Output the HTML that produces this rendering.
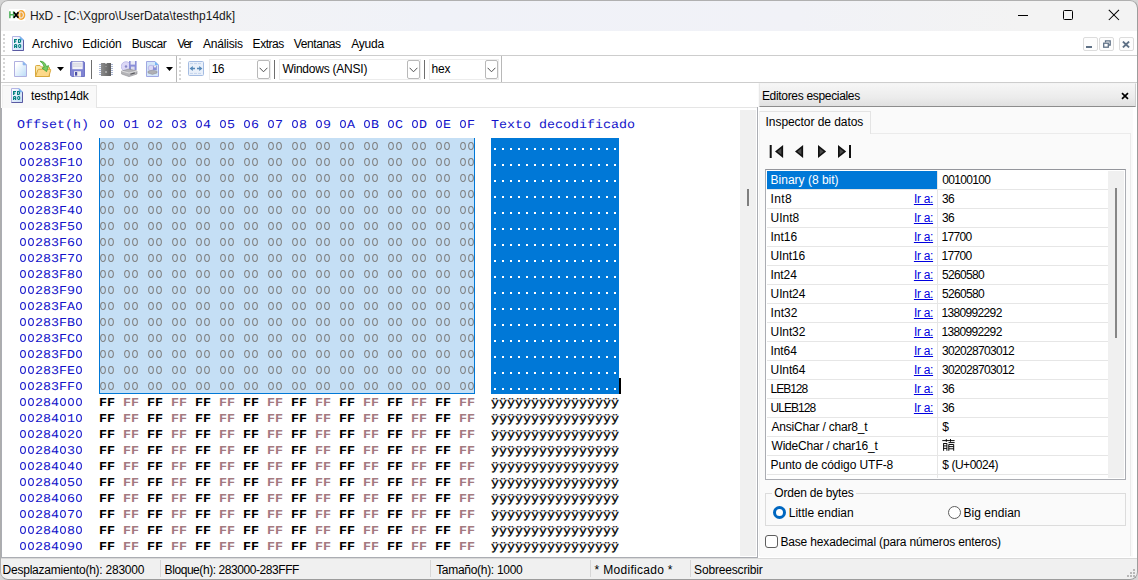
<!DOCTYPE html><html><head><meta charset="utf-8"><style>
*{box-sizing:border-box;margin:0;padding:0}
html,body{width:1138px;height:580px;overflow:hidden;background:#d4d4d4;font-family:"Liberation Sans",sans-serif}
body{font-family:"Liberation Sans",sans-serif;font-size:12px;color:#000;position:relative}
div,span,svg{position:absolute}
.t{white-space:pre;line-height:14px;height:14px;font-size:12px}
.m{font-family:"Liberation Mono",monospace;font-size:13.333px;white-space:pre;line-height:16px;height:16px;transform:scaleY(0.9);transform-origin:0 11px;text-rendering:geometricPrecision}
.o{color:#1212ca}
.s{color:#7a7a7a}
.k{color:#000;font-weight:bold}
.r{color:#a47a80;font-weight:bold}
.w{color:#fff}
.y{color:#000;transform:scaleY(0.86);transform-origin:0 12px;-webkit-text-stroke:0.35px #000}
.vs{width:1px;background:#d7d7d7}
.cb{background:#fff;border:1px solid #ececec}
.dd{background:#fff;border:1px solid #b9b9b9;border-radius:2px}
.ig{left:912px;width:24px}
</style></head><body>
<div style="left:0;top:0;width:1138px;height:580px;border-radius:8px;overflow:hidden">
<div style="left:0;top:0;width:1138px;height:580px;background:#f0f0f0"></div>
<div style="left:1px;top:1px;width:1136px;height:30px;background:linear-gradient(90deg,#f3f3f3 0%,#f3f3f4 12%,#f0f2f8 38%,#f1f2f7 70%,#f3f3f3 90%);border-radius:7px 7px 0 0"></div>
<svg style="left:9px;top:9px" width="17" height="12" viewBox="0 0 17 12"><rect width="16.3" height="11.8" fill="#fff"/><ellipse cx="12.2" cy="6" rx="4.1" ry="5" fill="#f2a534"/><path d="M10.8 3V9H12.2Q14.4 8.8 14.4 6Q14.4 3.2 12.2 3Z" fill="none" stroke="#f1f1fb" stroke-width="1"/><path d="M0.9 2.2V9.2M4.6 2.2V9.2M0.9 5.7H4.6" stroke="#4caf58" stroke-width="1.5" fill="none"/><path d="M4.8 3.2L9.4 8.8M9.4 3.2L4.8 8.8" stroke="#000" stroke-width="1.8"/></svg>
<div style="left:1018px;top:15px;width:10px;height:1px;background:#000"></div>
<div style="left:1063px;top:10px;width:10px;height:10px;border:1px solid #000;border-radius:1.5px"></div>
<svg style="left:1108px;top:9px" width="12" height="12" viewBox="0 0 12 12"><path d="M0.8 0.8L11 11M11 0.8L0.8 11" stroke="#000" stroke-width="1.05"/></svg>
<div style="left:1px;top:31px;width:1136px;height:24px;background:#fff"></div>
<div style="left:1px;top:55px;width:1136px;height:1px;background:#cdcdcd"></div>
<div style="left:3px;top:34px;width:2px;height:2px;background:#d6d6d6"></div><div style="left:3px;top:38px;width:2px;height:2px;background:#d6d6d6"></div><div style="left:3px;top:42px;width:2px;height:2px;background:#d6d6d6"></div><div style="left:3px;top:46px;width:2px;height:2px;background:#d6d6d6"></div><div style="left:3px;top:50px;width:2px;height:2px;background:#d6d6d6"></div>
<svg style="left:12px;top:36px" width="12" height="15" viewBox="0 0 12 15"><defs><linearGradient id="g1" x1="0" y1="0" x2="1" y2="1"><stop offset="0" stop-color="#fff"/><stop offset="1" stop-color="#c4dcf6"/></linearGradient></defs><path d="M0.5 0.5H8L11.5 4V14.5H0.5Z" fill="url(#g1)" stroke="#b4b4e4"/><path d="M11.5 4V14.5H0.5" fill="none" stroke="#5a5aa2"/><path d="M8 0.5V4H11.5Z" fill="#6aaef0" stroke="#8cb8ec" stroke-width="0.6"/><g fill="#058080"><rect x="2" y="3" width="1.3" height="4"/><rect x="2" y="3" width="3" height="1.1"/><rect x="2" y="4.7" width="2.3" height="1"/><rect x="6" y="3" width="1.3" height="4"/><rect x="6" y="3" width="2.4" height="1"/><rect x="6" y="6" width="2.4" height="1"/><rect x="8" y="3.7" width="1.1" height="2.6"/><rect x="2" y="8.7" width="1.2" height="3.3"/><rect x="4" y="8.7" width="1.2" height="3.3"/><rect x="2.6" y="8" width="2" height="1.1"/><rect x="2" y="10" width="3" height="0.9"/><rect x="6.2" y="8.7" width="1.1" height="2.6"/><rect x="8.1" y="8.7" width="1.1" height="2.6"/><rect x="6.9" y="8" width="1.7" height="1"/><rect x="6.9" y="11" width="1.7" height="1"/></g></svg>
<div style="left:1083px;top:37px;width:15px;height:14px;border:1px solid #dcdcdc;border-radius:2px;background:#fdfdfd"></div><div style="left:1099px;top:37px;width:15px;height:14px;border:1px solid #dcdcdc;border-radius:2px;background:#fdfdfd"></div><div style="left:1118.5px;top:37px;width:15px;height:14px;border:1px solid #dcdcdc;border-radius:2px;background:#fdfdfd"></div>
<div style="left:1086px;top:46px;width:6px;height:2px;background:#5f7186"></div>
<svg style="left:1103px;top:40px" width="8" height="8" viewBox="0 0 8 8"><path d="M2.5 2.5V0.8H7.2V5H5.5" fill="none" stroke="#5f7186" stroke-width="1.3"/><rect x="0.7" y="3.2" width="4.6" height="4" fill="#fff" stroke="#5f7186" stroke-width="1.3"/></svg>
<svg style="left:1122px;top:41px" width="8" height="7" viewBox="0 0 8 7"><path d="M0.9 0.6L7.1 6.4M7.1 0.6L0.9 6.4" stroke="#5f7186" stroke-width="1.9"/></svg>
<div style="left:1px;top:56px;width:1136px;height:26px;background:#fff"></div>
<div style="left:1px;top:82px;width:1136px;height:1px;background:#cdcdcd"></div>
<div style="left:3px;top:58px;width:2px;height:2px;background:#d6d6d6"></div><div style="left:3px;top:62px;width:2px;height:2px;background:#d6d6d6"></div><div style="left:3px;top:66px;width:2px;height:2px;background:#d6d6d6"></div><div style="left:3px;top:70px;width:2px;height:2px;background:#d6d6d6"></div><div style="left:3px;top:74px;width:2px;height:2px;background:#d6d6d6"></div><div style="left:3px;top:78px;width:2px;height:2px;background:#d6d6d6"></div>
<div style="left:179px;top:58px;width:2px;height:2px;background:#d6d6d6"></div><div style="left:179px;top:62px;width:2px;height:2px;background:#d6d6d6"></div><div style="left:179px;top:66px;width:2px;height:2px;background:#d6d6d6"></div><div style="left:179px;top:70px;width:2px;height:2px;background:#d6d6d6"></div><div style="left:179px;top:74px;width:2px;height:2px;background:#d6d6d6"></div><div style="left:179px;top:78px;width:2px;height:2px;background:#d6d6d6"></div>
<div style="left:176px;top:56px;width:1px;height:26px;background:#b8b8b8"></div>
<div style="left:501px;top:56px;width:1px;height:26px;background:#b8b8b8"></div>
<svg style="left:14px;top:61px" width="13" height="16" viewBox="0 0 13 16"><defs><linearGradient id="gn" x1="0" y1="0" x2="1" y2="1"><stop offset="0.2" stop-color="#fff"/><stop offset="1" stop-color="#b9dbf7"/></linearGradient></defs><path d="M0.5 0.5H9L12.5 4V15.5H0.5Z" fill="url(#gn)" stroke="#b0b0e0"/><path d="M9 0.5V4H12.5Z" fill="#74b6f4" stroke="#a8b8e8" stroke-width="0.7"/></svg>
<svg style="left:34px;top:60px" width="18" height="18" viewBox="0 0 18 18"><path d="M1.5 16.5V6.5Q1.5 5.5 2.5 5.5H6L7.5 7H14.5Q15.5 7 15.5 8V16.5Z" fill="#fbe7a8" stroke="#d9a93e"/><path d="M1.5 16.5L3.8 10Q4 9.3 4.8 9.3H16Q17 9.3 16.7 10.2L14.8 16.5Z" fill="#fdd98a" stroke="#d9a93e"/><path d="M6 1.2Q11 1.2 12.4 6.5L14.6 5.6L12.6 11.6L8 8.2L10.3 7.3Q9.5 3.2 6 1.2Z" fill="#78cc62" stroke="#45a338" stroke-width="0.8"/></svg>
<svg style="left:57px;top:67px" width="7" height="4" viewBox="0 0 7 4"><path d="M0 0H7L3.5 4Z" fill="#000"/></svg>
<svg style="left:70px;top:61px" width="15" height="16" viewBox="0 0 15 16"><path d="M1.3 0.5H13.7L14.5 1.3V15.5H1.8L0.5 14.2V1.3Z" fill="#7f83d3" stroke="#7074c4"/><rect x="2.3" y="0.6" width="10.4" height="7.6" fill="#f4f4f8"/><rect x="3.6" y="2.2" width="7.6" height="3.6" fill="#e2e2ea" stroke="#d2d2dc" stroke-width="0.5"/><rect x="4" y="10.3" width="7" height="5.2" fill="#f0f0f0"/><rect x="5" y="11" width="2.2" height="3.6" fill="#4a4ea6"/></svg>
<div style="left:91px;top:60px;width:1px;height:19px;background:#6e6e6e"></div>
<svg style="left:99px;top:62px" width="14" height="14" viewBox="0 0 14 14"><defs><linearGradient id="gc" x1="0" y1="0" x2="1" y2="0"><stop offset="0" stop-color="#8c8c8c"/><stop offset="1" stop-color="#5e5e5e"/></linearGradient></defs><rect x="0" y="2" width="2" height="1" fill="#a9b6d4"/><rect x="12" y="2" width="2" height="1" fill="#a9b6d4"/><rect x="0" y="4" width="2" height="1" fill="#a9b6d4"/><rect x="12" y="4" width="2" height="1" fill="#a9b6d4"/><rect x="0" y="6" width="2" height="1" fill="#a9b6d4"/><rect x="12" y="6" width="2" height="1" fill="#a9b6d4"/><rect x="0" y="8" width="2" height="1" fill="#a9b6d4"/><rect x="12" y="8" width="2" height="1" fill="#a9b6d4"/><rect x="0" y="10" width="2" height="1" fill="#a9b6d4"/><rect x="12" y="10" width="2" height="1" fill="#a9b6d4"/><rect x="0" y="12" width="2" height="1" fill="#a9b6d4"/><rect x="12" y="12" width="2" height="1" fill="#a9b6d4"/><rect x="2" y="1" width="10" height="13" fill="url(#gc)"/><rect x="6" y="1" width="2" height="1" fill="#c0c0c0"/><rect x="6" y="9" width="2" height="2" fill="#a4a4a4"/><rect x="6" y="4" width="2" height="1" fill="#8e8e8e"/></svg>
<svg style="left:121px;top:60px" width="17" height="17" viewBox="0 0 17 17"><circle cx="5" cy="6.5" r="4.8" fill="#dcd8f6" stroke="#b8b4e6" stroke-width="0.8"/><circle cx="5" cy="6.5" r="1.2" fill="#8888c8"/><rect x="8" y="1" width="7.6" height="9" fill="#8a8ed8"/><rect x="9.6" y="1" width="4.4" height="3.6" fill="#ececf6"/><rect x="10" y="6.6" width="3.6" height="3.4" fill="#dcdcec"/><path d="M0.6 11L8 9L16 11V14L8 16.6L0.6 14Z" fill="#b4b4b8" stroke="#8c8c90" stroke-width="0.6"/><path d="M0.6 11L8 13L16 11" fill="none" stroke="#e6e6e6" stroke-width="0.8"/><rect x="9.4" y="13.2" width="4.6" height="1.2" fill="#5a5a5e" transform="rotate(-17 11 14)"/></svg>
<svg style="left:146px;top:61px" width="13" height="16" viewBox="0 0 13 16"><path d="M0.5 0.5H9L12.5 4V15.5H0.5Z" fill="#d4e6fa" stroke="#a0a8e2"/><path d="M9 0.5V4H12.5Z" fill="#74b6f4"/><circle cx="5" cy="7" r="2.8" fill="#dcd8f6" stroke="#a8a4dc" stroke-width="0.6"/><rect x="7" y="4.6" width="3.8" height="4.6" fill="#8a8ed8"/><rect x="7.8" y="4.6" width="2.2" height="1.8" fill="#eee"/><path d="M2 10.2L6.4 9.2L11 10.2V12L6.4 13.4L2 12Z" fill="#b0b0b4" stroke="#8c8c90" stroke-width="0.5"/></svg>
<svg style="left:166px;top:67px" width="7" height="4" viewBox="0 0 7 4"><path d="M0 0H7L3.5 4Z" fill="#000"/></svg>
<svg style="left:188px;top:61px" width="16" height="15" viewBox="0 0 16 15"><rect x="0.5" y="0.5" width="15" height="14" rx="1" fill="#e9f0fa" stroke="#a4bce2"/><path d="M2 2.6H14M2 12.4H14" stroke="#c4d4ec" stroke-width="1" stroke-dasharray="3 1"/><path d="M1.6 7.5L4.8 4.9V6.8H7V8.2H4.8V10.1Z M14.4 7.5L11.2 4.9V6.8H9V8.2H11.2V10.1Z" fill="#5588b8"/></svg>
<div class="cb" style="left:209px;top:59px;width:62px;height:21px"></div><div class="dd" style="left:257px;top:60px;width:13px;height:19px"></div><svg style="left:259px;top:67px" width="9" height="6" viewBox="0 0 9 6"><path d="M0.6 0.8L4.5 4.8L8.4 0.8" fill="none" stroke="#505050" stroke-width="1"/></svg>
<div class="cb" style="left:279px;top:59px;width:142px;height:21px"></div><div class="dd" style="left:407px;top:60px;width:13px;height:19px"></div><svg style="left:409px;top:67px" width="9" height="6" viewBox="0 0 9 6"><path d="M0.6 0.8L4.5 4.8L8.4 0.8" fill="none" stroke="#505050" stroke-width="1"/></svg>
<div class="cb" style="left:429px;top:59px;width:70px;height:21px"></div><div class="dd" style="left:485px;top:60px;width:13px;height:19px"></div><svg style="left:487px;top:67px" width="9" height="6" viewBox="0 0 9 6"><path d="M0.6 0.8L4.5 4.8L8.4 0.8" fill="none" stroke="#505050" stroke-width="1"/></svg>
<div style="left:274px;top:60px;width:1px;height:19px;background:#6e6e6e"></div>
<div style="left:424px;top:60px;width:1px;height:19px;background:#6e6e6e"></div>
<div style="left:1px;top:83px;width:757px;height:25px;background:#fff"></div>
<div style="left:96px;top:107px;width:662px;height:1px;background:#e5e5e5"></div>
<div style="left:2px;top:85px;width:95px;height:23px;background:#f9f9f9;border:1px solid #e5e5e5;border-bottom:none;border-left-color:#f2f2f2"></div>
<svg style="left:11px;top:88px" width="12" height="15" viewBox="0 0 12 15"><defs><linearGradient id="g2" x1="0" y1="0" x2="1" y2="1"><stop offset="0" stop-color="#fff"/><stop offset="1" stop-color="#c4dcf6"/></linearGradient></defs><path d="M0.5 0.5H8L11.5 4V14.5H0.5Z" fill="url(#g2)" stroke="#b4b4e4"/><path d="M11.5 4V14.5H0.5" fill="none" stroke="#5a5aa2"/><path d="M8 0.5V4H11.5Z" fill="#6aaef0" stroke="#8cb8ec" stroke-width="0.6"/><g fill="#058080"><rect x="2" y="3" width="1.3" height="4"/><rect x="2" y="3" width="3" height="1.1"/><rect x="2" y="4.7" width="2.3" height="1"/><rect x="6" y="3" width="1.3" height="4"/><rect x="6" y="3" width="2.4" height="1"/><rect x="6" y="6" width="2.4" height="1"/><rect x="8" y="3.7" width="1.1" height="2.6"/><rect x="2" y="8.7" width="1.2" height="3.3"/><rect x="4" y="8.7" width="1.2" height="3.3"/><rect x="2.6" y="8" width="2" height="1.1"/><rect x="2" y="10" width="3" height="0.9"/><rect x="6.2" y="8.7" width="1.1" height="2.6"/><rect x="8.1" y="8.7" width="1.1" height="2.6"/><rect x="6.9" y="8" width="1.7" height="1"/><rect x="6.9" y="11" width="1.7" height="1"/></g></svg>
<div style="left:1px;top:108px;width:756px;height:449px;background:#fff"></div>
<div style="left:757px;top:107px;width:1px;height:451px;background:#abadb3"></div>
<div style="left:1px;top:108px;width:1px;height:450px;background:#abadb3"></div>
<div style="left:1px;top:557px;width:757px;height:1px;background:#abadb3"></div>
<div style="left:740px;top:110px;width:16px;height:446px;background:#f0f0f0"></div>
<div style="left:747px;top:189px;width:2px;height:17px;background:#7e7e7e"></div>
<div style="left:99px;top:138px;width:376px;height:256px;background:#c5dff5;border:1px solid #0078d7;border-top:none"></div>
<div style="left:491px;top:138px;width:128px;height:256px;background:#0078d7"></div>
<div style="left:619px;top:378px;width:2px;height:16px;background:#000"></div>
<svg style="left:99px;top:138px" width="376" height="256"><defs><pattern id="zz" width="24" height="16" patternUnits="userSpaceOnUse"><ellipse cx="4" cy="8" rx="2.35" ry="3.5" fill="none" stroke="#7e7e7e" stroke-width="1.05"/><ellipse cx="12" cy="8" rx="2.35" ry="3.5" fill="none" stroke="#7e7e7e" stroke-width="1.05"/></pattern></defs><rect width="376" height="256" fill="url(#zz)"/></svg>
<div class="m o" style="left:17px;top:118px">Offset(h)</div>
<div class="m o" style="left:99px;top:118px">    1  2  3  4  5  6  7  8  9  A  B  C  D  E  F</div>
<div class="m o" style="left:491px;top:118px">Texto decodificado</div>
<div class="m o" style="left:19px;top:140px">  283F  </div>
<div class="m o" style="left:19px;top:156px">  283F1 </div>
<div class="m o" style="left:19px;top:172px">  283F2 </div>
<div class="m o" style="left:19px;top:188px">  283F3 </div>
<div class="m o" style="left:19px;top:204px">  283F4 </div>
<div class="m o" style="left:19px;top:220px">  283F5 </div>
<div class="m o" style="left:19px;top:236px">  283F6 </div>
<div class="m o" style="left:19px;top:252px">  283F7 </div>
<div class="m o" style="left:19px;top:268px">  283F8 </div>
<div class="m o" style="left:19px;top:284px">  283F9 </div>
<div class="m o" style="left:19px;top:300px">  283FA </div>
<div class="m o" style="left:19px;top:316px">  283FB </div>
<div class="m o" style="left:19px;top:332px">  283FC </div>
<div class="m o" style="left:19px;top:348px">  283FD </div>
<div class="m o" style="left:19px;top:364px">  283FE </div>
<div class="m o" style="left:19px;top:380px">  283FF </div>
<svg style="left:491px;top:138px" width="128" height="256" fill="#fff"><rect x="3" y="10" width="2" height="2"/><rect x="11" y="10" width="2" height="2"/><rect x="19" y="10" width="2" height="2"/><rect x="27" y="10" width="2" height="2"/><rect x="35" y="10" width="2" height="2"/><rect x="43" y="10" width="2" height="2"/><rect x="51" y="10" width="2" height="2"/><rect x="59" y="10" width="2" height="2"/><rect x="67" y="10" width="2" height="2"/><rect x="75" y="10" width="2" height="2"/><rect x="83" y="10" width="2" height="2"/><rect x="91" y="10" width="2" height="2"/><rect x="99" y="10" width="2" height="2"/><rect x="107" y="10" width="2" height="2"/><rect x="115" y="10" width="2" height="2"/><rect x="123" y="10" width="2" height="2"/><rect x="3" y="26" width="2" height="2"/><rect x="11" y="26" width="2" height="2"/><rect x="19" y="26" width="2" height="2"/><rect x="27" y="26" width="2" height="2"/><rect x="35" y="26" width="2" height="2"/><rect x="43" y="26" width="2" height="2"/><rect x="51" y="26" width="2" height="2"/><rect x="59" y="26" width="2" height="2"/><rect x="67" y="26" width="2" height="2"/><rect x="75" y="26" width="2" height="2"/><rect x="83" y="26" width="2" height="2"/><rect x="91" y="26" width="2" height="2"/><rect x="99" y="26" width="2" height="2"/><rect x="107" y="26" width="2" height="2"/><rect x="115" y="26" width="2" height="2"/><rect x="123" y="26" width="2" height="2"/><rect x="3" y="42" width="2" height="2"/><rect x="11" y="42" width="2" height="2"/><rect x="19" y="42" width="2" height="2"/><rect x="27" y="42" width="2" height="2"/><rect x="35" y="42" width="2" height="2"/><rect x="43" y="42" width="2" height="2"/><rect x="51" y="42" width="2" height="2"/><rect x="59" y="42" width="2" height="2"/><rect x="67" y="42" width="2" height="2"/><rect x="75" y="42" width="2" height="2"/><rect x="83" y="42" width="2" height="2"/><rect x="91" y="42" width="2" height="2"/><rect x="99" y="42" width="2" height="2"/><rect x="107" y="42" width="2" height="2"/><rect x="115" y="42" width="2" height="2"/><rect x="123" y="42" width="2" height="2"/><rect x="3" y="58" width="2" height="2"/><rect x="11" y="58" width="2" height="2"/><rect x="19" y="58" width="2" height="2"/><rect x="27" y="58" width="2" height="2"/><rect x="35" y="58" width="2" height="2"/><rect x="43" y="58" width="2" height="2"/><rect x="51" y="58" width="2" height="2"/><rect x="59" y="58" width="2" height="2"/><rect x="67" y="58" width="2" height="2"/><rect x="75" y="58" width="2" height="2"/><rect x="83" y="58" width="2" height="2"/><rect x="91" y="58" width="2" height="2"/><rect x="99" y="58" width="2" height="2"/><rect x="107" y="58" width="2" height="2"/><rect x="115" y="58" width="2" height="2"/><rect x="123" y="58" width="2" height="2"/><rect x="3" y="74" width="2" height="2"/><rect x="11" y="74" width="2" height="2"/><rect x="19" y="74" width="2" height="2"/><rect x="27" y="74" width="2" height="2"/><rect x="35" y="74" width="2" height="2"/><rect x="43" y="74" width="2" height="2"/><rect x="51" y="74" width="2" height="2"/><rect x="59" y="74" width="2" height="2"/><rect x="67" y="74" width="2" height="2"/><rect x="75" y="74" width="2" height="2"/><rect x="83" y="74" width="2" height="2"/><rect x="91" y="74" width="2" height="2"/><rect x="99" y="74" width="2" height="2"/><rect x="107" y="74" width="2" height="2"/><rect x="115" y="74" width="2" height="2"/><rect x="123" y="74" width="2" height="2"/><rect x="3" y="90" width="2" height="2"/><rect x="11" y="90" width="2" height="2"/><rect x="19" y="90" width="2" height="2"/><rect x="27" y="90" width="2" height="2"/><rect x="35" y="90" width="2" height="2"/><rect x="43" y="90" width="2" height="2"/><rect x="51" y="90" width="2" height="2"/><rect x="59" y="90" width="2" height="2"/><rect x="67" y="90" width="2" height="2"/><rect x="75" y="90" width="2" height="2"/><rect x="83" y="90" width="2" height="2"/><rect x="91" y="90" width="2" height="2"/><rect x="99" y="90" width="2" height="2"/><rect x="107" y="90" width="2" height="2"/><rect x="115" y="90" width="2" height="2"/><rect x="123" y="90" width="2" height="2"/><rect x="3" y="106" width="2" height="2"/><rect x="11" y="106" width="2" height="2"/><rect x="19" y="106" width="2" height="2"/><rect x="27" y="106" width="2" height="2"/><rect x="35" y="106" width="2" height="2"/><rect x="43" y="106" width="2" height="2"/><rect x="51" y="106" width="2" height="2"/><rect x="59" y="106" width="2" height="2"/><rect x="67" y="106" width="2" height="2"/><rect x="75" y="106" width="2" height="2"/><rect x="83" y="106" width="2" height="2"/><rect x="91" y="106" width="2" height="2"/><rect x="99" y="106" width="2" height="2"/><rect x="107" y="106" width="2" height="2"/><rect x="115" y="106" width="2" height="2"/><rect x="123" y="106" width="2" height="2"/><rect x="3" y="122" width="2" height="2"/><rect x="11" y="122" width="2" height="2"/><rect x="19" y="122" width="2" height="2"/><rect x="27" y="122" width="2" height="2"/><rect x="35" y="122" width="2" height="2"/><rect x="43" y="122" width="2" height="2"/><rect x="51" y="122" width="2" height="2"/><rect x="59" y="122" width="2" height="2"/><rect x="67" y="122" width="2" height="2"/><rect x="75" y="122" width="2" height="2"/><rect x="83" y="122" width="2" height="2"/><rect x="91" y="122" width="2" height="2"/><rect x="99" y="122" width="2" height="2"/><rect x="107" y="122" width="2" height="2"/><rect x="115" y="122" width="2" height="2"/><rect x="123" y="122" width="2" height="2"/><rect x="3" y="138" width="2" height="2"/><rect x="11" y="138" width="2" height="2"/><rect x="19" y="138" width="2" height="2"/><rect x="27" y="138" width="2" height="2"/><rect x="35" y="138" width="2" height="2"/><rect x="43" y="138" width="2" height="2"/><rect x="51" y="138" width="2" height="2"/><rect x="59" y="138" width="2" height="2"/><rect x="67" y="138" width="2" height="2"/><rect x="75" y="138" width="2" height="2"/><rect x="83" y="138" width="2" height="2"/><rect x="91" y="138" width="2" height="2"/><rect x="99" y="138" width="2" height="2"/><rect x="107" y="138" width="2" height="2"/><rect x="115" y="138" width="2" height="2"/><rect x="123" y="138" width="2" height="2"/><rect x="3" y="154" width="2" height="2"/><rect x="11" y="154" width="2" height="2"/><rect x="19" y="154" width="2" height="2"/><rect x="27" y="154" width="2" height="2"/><rect x="35" y="154" width="2" height="2"/><rect x="43" y="154" width="2" height="2"/><rect x="51" y="154" width="2" height="2"/><rect x="59" y="154" width="2" height="2"/><rect x="67" y="154" width="2" height="2"/><rect x="75" y="154" width="2" height="2"/><rect x="83" y="154" width="2" height="2"/><rect x="91" y="154" width="2" height="2"/><rect x="99" y="154" width="2" height="2"/><rect x="107" y="154" width="2" height="2"/><rect x="115" y="154" width="2" height="2"/><rect x="123" y="154" width="2" height="2"/><rect x="3" y="170" width="2" height="2"/><rect x="11" y="170" width="2" height="2"/><rect x="19" y="170" width="2" height="2"/><rect x="27" y="170" width="2" height="2"/><rect x="35" y="170" width="2" height="2"/><rect x="43" y="170" width="2" height="2"/><rect x="51" y="170" width="2" height="2"/><rect x="59" y="170" width="2" height="2"/><rect x="67" y="170" width="2" height="2"/><rect x="75" y="170" width="2" height="2"/><rect x="83" y="170" width="2" height="2"/><rect x="91" y="170" width="2" height="2"/><rect x="99" y="170" width="2" height="2"/><rect x="107" y="170" width="2" height="2"/><rect x="115" y="170" width="2" height="2"/><rect x="123" y="170" width="2" height="2"/><rect x="3" y="186" width="2" height="2"/><rect x="11" y="186" width="2" height="2"/><rect x="19" y="186" width="2" height="2"/><rect x="27" y="186" width="2" height="2"/><rect x="35" y="186" width="2" height="2"/><rect x="43" y="186" width="2" height="2"/><rect x="51" y="186" width="2" height="2"/><rect x="59" y="186" width="2" height="2"/><rect x="67" y="186" width="2" height="2"/><rect x="75" y="186" width="2" height="2"/><rect x="83" y="186" width="2" height="2"/><rect x="91" y="186" width="2" height="2"/><rect x="99" y="186" width="2" height="2"/><rect x="107" y="186" width="2" height="2"/><rect x="115" y="186" width="2" height="2"/><rect x="123" y="186" width="2" height="2"/><rect x="3" y="202" width="2" height="2"/><rect x="11" y="202" width="2" height="2"/><rect x="19" y="202" width="2" height="2"/><rect x="27" y="202" width="2" height="2"/><rect x="35" y="202" width="2" height="2"/><rect x="43" y="202" width="2" height="2"/><rect x="51" y="202" width="2" height="2"/><rect x="59" y="202" width="2" height="2"/><rect x="67" y="202" width="2" height="2"/><rect x="75" y="202" width="2" height="2"/><rect x="83" y="202" width="2" height="2"/><rect x="91" y="202" width="2" height="2"/><rect x="99" y="202" width="2" height="2"/><rect x="107" y="202" width="2" height="2"/><rect x="115" y="202" width="2" height="2"/><rect x="123" y="202" width="2" height="2"/><rect x="3" y="218" width="2" height="2"/><rect x="11" y="218" width="2" height="2"/><rect x="19" y="218" width="2" height="2"/><rect x="27" y="218" width="2" height="2"/><rect x="35" y="218" width="2" height="2"/><rect x="43" y="218" width="2" height="2"/><rect x="51" y="218" width="2" height="2"/><rect x="59" y="218" width="2" height="2"/><rect x="67" y="218" width="2" height="2"/><rect x="75" y="218" width="2" height="2"/><rect x="83" y="218" width="2" height="2"/><rect x="91" y="218" width="2" height="2"/><rect x="99" y="218" width="2" height="2"/><rect x="107" y="218" width="2" height="2"/><rect x="115" y="218" width="2" height="2"/><rect x="123" y="218" width="2" height="2"/><rect x="3" y="234" width="2" height="2"/><rect x="11" y="234" width="2" height="2"/><rect x="19" y="234" width="2" height="2"/><rect x="27" y="234" width="2" height="2"/><rect x="35" y="234" width="2" height="2"/><rect x="43" y="234" width="2" height="2"/><rect x="51" y="234" width="2" height="2"/><rect x="59" y="234" width="2" height="2"/><rect x="67" y="234" width="2" height="2"/><rect x="75" y="234" width="2" height="2"/><rect x="83" y="234" width="2" height="2"/><rect x="91" y="234" width="2" height="2"/><rect x="99" y="234" width="2" height="2"/><rect x="107" y="234" width="2" height="2"/><rect x="115" y="234" width="2" height="2"/><rect x="123" y="234" width="2" height="2"/><rect x="3" y="250" width="2" height="2"/><rect x="11" y="250" width="2" height="2"/><rect x="19" y="250" width="2" height="2"/><rect x="27" y="250" width="2" height="2"/><rect x="35" y="250" width="2" height="2"/><rect x="43" y="250" width="2" height="2"/><rect x="51" y="250" width="2" height="2"/><rect x="59" y="250" width="2" height="2"/><rect x="67" y="250" width="2" height="2"/><rect x="75" y="250" width="2" height="2"/><rect x="83" y="250" width="2" height="2"/><rect x="91" y="250" width="2" height="2"/><rect x="99" y="250" width="2" height="2"/><rect x="107" y="250" width="2" height="2"/><rect x="115" y="250" width="2" height="2"/><rect x="123" y="250" width="2" height="2"/></svg>
<div class="m o" style="left:19px;top:396px">  284   </div>
<div class="m k" style="left:99px;top:396px">FF    FF    FF    FF    FF    FF    FF    FF</div>
<div class="m r" style="left:123px;top:396px">FF    FF    FF    FF    FF    FF    FF    FF</div>
<div class="m y" style="left:491px;top:396px">ÿÿÿÿÿÿÿÿÿÿÿÿÿÿÿÿ</div>
<div class="m o" style="left:19px;top:412px">  284 1 </div>
<div class="m k" style="left:99px;top:412px">FF    FF    FF    FF    FF    FF    FF    FF</div>
<div class="m r" style="left:123px;top:412px">FF    FF    FF    FF    FF    FF    FF    FF</div>
<div class="m y" style="left:491px;top:412px">ÿÿÿÿÿÿÿÿÿÿÿÿÿÿÿÿ</div>
<div class="m o" style="left:19px;top:428px">  284 2 </div>
<div class="m k" style="left:99px;top:428px">FF    FF    FF    FF    FF    FF    FF    FF</div>
<div class="m r" style="left:123px;top:428px">FF    FF    FF    FF    FF    FF    FF    FF</div>
<div class="m y" style="left:491px;top:428px">ÿÿÿÿÿÿÿÿÿÿÿÿÿÿÿÿ</div>
<div class="m o" style="left:19px;top:444px">  284 3 </div>
<div class="m k" style="left:99px;top:444px">FF    FF    FF    FF    FF    FF    FF    FF</div>
<div class="m r" style="left:123px;top:444px">FF    FF    FF    FF    FF    FF    FF    FF</div>
<div class="m y" style="left:491px;top:444px">ÿÿÿÿÿÿÿÿÿÿÿÿÿÿÿÿ</div>
<div class="m o" style="left:19px;top:460px">  284 4 </div>
<div class="m k" style="left:99px;top:460px">FF    FF    FF    FF    FF    FF    FF    FF</div>
<div class="m r" style="left:123px;top:460px">FF    FF    FF    FF    FF    FF    FF    FF</div>
<div class="m y" style="left:491px;top:460px">ÿÿÿÿÿÿÿÿÿÿÿÿÿÿÿÿ</div>
<div class="m o" style="left:19px;top:476px">  284 5 </div>
<div class="m k" style="left:99px;top:476px">FF    FF    FF    FF    FF    FF    FF    FF</div>
<div class="m r" style="left:123px;top:476px">FF    FF    FF    FF    FF    FF    FF    FF</div>
<div class="m y" style="left:491px;top:476px">ÿÿÿÿÿÿÿÿÿÿÿÿÿÿÿÿ</div>
<div class="m o" style="left:19px;top:492px">  284 6 </div>
<div class="m k" style="left:99px;top:492px">FF    FF    FF    FF    FF    FF    FF    FF</div>
<div class="m r" style="left:123px;top:492px">FF    FF    FF    FF    FF    FF    FF    FF</div>
<div class="m y" style="left:491px;top:492px">ÿÿÿÿÿÿÿÿÿÿÿÿÿÿÿÿ</div>
<div class="m o" style="left:19px;top:508px">  284 7 </div>
<div class="m k" style="left:99px;top:508px">FF    FF    FF    FF    FF    FF    FF    FF</div>
<div class="m r" style="left:123px;top:508px">FF    FF    FF    FF    FF    FF    FF    FF</div>
<div class="m y" style="left:491px;top:508px">ÿÿÿÿÿÿÿÿÿÿÿÿÿÿÿÿ</div>
<div class="m o" style="left:19px;top:524px">  284 8 </div>
<div class="m k" style="left:99px;top:524px">FF    FF    FF    FF    FF    FF    FF    FF</div>
<div class="m r" style="left:123px;top:524px">FF    FF    FF    FF    FF    FF    FF    FF</div>
<div class="m y" style="left:491px;top:524px">ÿÿÿÿÿÿÿÿÿÿÿÿÿÿÿÿ</div>
<div class="m o" style="left:19px;top:540px">  284 9 </div>
<div class="m k" style="left:99px;top:540px">FF    FF    FF    FF    FF    FF    FF    FF</div>
<div class="m r" style="left:123px;top:540px">FF    FF    FF    FF    FF    FF    FF    FF</div>
<div class="m y" style="left:491px;top:540px">ÿÿÿÿÿÿÿÿÿÿÿÿÿÿÿÿ</div>
<svg style="left:0;top:0" width="640" height="560" fill="none" stroke="#1818cc" stroke-width="1.1"><ellipse cx="103" cy="124" rx="2.4" ry="3.5"/><ellipse cx="111" cy="124" rx="2.4" ry="3.5"/><ellipse cx="127" cy="124" rx="2.4" ry="3.5"/><ellipse cx="151" cy="124" rx="2.4" ry="3.5"/><ellipse cx="175" cy="124" rx="2.4" ry="3.5"/><ellipse cx="199" cy="124" rx="2.4" ry="3.5"/><ellipse cx="223" cy="124" rx="2.4" ry="3.5"/><ellipse cx="247" cy="124" rx="2.4" ry="3.5"/><ellipse cx="271" cy="124" rx="2.4" ry="3.5"/><ellipse cx="295" cy="124" rx="2.4" ry="3.5"/><ellipse cx="319" cy="124" rx="2.4" ry="3.5"/><ellipse cx="343" cy="124" rx="2.4" ry="3.5"/><ellipse cx="367" cy="124" rx="2.4" ry="3.5"/><ellipse cx="391" cy="124" rx="2.4" ry="3.5"/><ellipse cx="415" cy="124" rx="2.4" ry="3.5"/><ellipse cx="439" cy="124" rx="2.4" ry="3.5"/><ellipse cx="463" cy="124" rx="2.4" ry="3.5"/><ellipse cx="23" cy="146" rx="2.4" ry="3.5"/><ellipse cx="31" cy="146" rx="2.4" ry="3.5"/><ellipse cx="71" cy="146" rx="2.4" ry="3.5"/><ellipse cx="79" cy="146" rx="2.4" ry="3.5"/><ellipse cx="23" cy="162" rx="2.4" ry="3.5"/><ellipse cx="31" cy="162" rx="2.4" ry="3.5"/><ellipse cx="79" cy="162" rx="2.4" ry="3.5"/><ellipse cx="23" cy="178" rx="2.4" ry="3.5"/><ellipse cx="31" cy="178" rx="2.4" ry="3.5"/><ellipse cx="79" cy="178" rx="2.4" ry="3.5"/><ellipse cx="23" cy="194" rx="2.4" ry="3.5"/><ellipse cx="31" cy="194" rx="2.4" ry="3.5"/><ellipse cx="79" cy="194" rx="2.4" ry="3.5"/><ellipse cx="23" cy="210" rx="2.4" ry="3.5"/><ellipse cx="31" cy="210" rx="2.4" ry="3.5"/><ellipse cx="79" cy="210" rx="2.4" ry="3.5"/><ellipse cx="23" cy="226" rx="2.4" ry="3.5"/><ellipse cx="31" cy="226" rx="2.4" ry="3.5"/><ellipse cx="79" cy="226" rx="2.4" ry="3.5"/><ellipse cx="23" cy="242" rx="2.4" ry="3.5"/><ellipse cx="31" cy="242" rx="2.4" ry="3.5"/><ellipse cx="79" cy="242" rx="2.4" ry="3.5"/><ellipse cx="23" cy="258" rx="2.4" ry="3.5"/><ellipse cx="31" cy="258" rx="2.4" ry="3.5"/><ellipse cx="79" cy="258" rx="2.4" ry="3.5"/><ellipse cx="23" cy="274" rx="2.4" ry="3.5"/><ellipse cx="31" cy="274" rx="2.4" ry="3.5"/><ellipse cx="79" cy="274" rx="2.4" ry="3.5"/><ellipse cx="23" cy="290" rx="2.4" ry="3.5"/><ellipse cx="31" cy="290" rx="2.4" ry="3.5"/><ellipse cx="79" cy="290" rx="2.4" ry="3.5"/><ellipse cx="23" cy="306" rx="2.4" ry="3.5"/><ellipse cx="31" cy="306" rx="2.4" ry="3.5"/><ellipse cx="79" cy="306" rx="2.4" ry="3.5"/><ellipse cx="23" cy="322" rx="2.4" ry="3.5"/><ellipse cx="31" cy="322" rx="2.4" ry="3.5"/><ellipse cx="79" cy="322" rx="2.4" ry="3.5"/><ellipse cx="23" cy="338" rx="2.4" ry="3.5"/><ellipse cx="31" cy="338" rx="2.4" ry="3.5"/><ellipse cx="79" cy="338" rx="2.4" ry="3.5"/><ellipse cx="23" cy="354" rx="2.4" ry="3.5"/><ellipse cx="31" cy="354" rx="2.4" ry="3.5"/><ellipse cx="79" cy="354" rx="2.4" ry="3.5"/><ellipse cx="23" cy="370" rx="2.4" ry="3.5"/><ellipse cx="31" cy="370" rx="2.4" ry="3.5"/><ellipse cx="79" cy="370" rx="2.4" ry="3.5"/><ellipse cx="23" cy="386" rx="2.4" ry="3.5"/><ellipse cx="31" cy="386" rx="2.4" ry="3.5"/><ellipse cx="79" cy="386" rx="2.4" ry="3.5"/><ellipse cx="23" cy="402" rx="2.4" ry="3.5"/><ellipse cx="31" cy="402" rx="2.4" ry="3.5"/><ellipse cx="63" cy="402" rx="2.4" ry="3.5"/><ellipse cx="71" cy="402" rx="2.4" ry="3.5"/><ellipse cx="79" cy="402" rx="2.4" ry="3.5"/><ellipse cx="23" cy="418" rx="2.4" ry="3.5"/><ellipse cx="31" cy="418" rx="2.4" ry="3.5"/><ellipse cx="63" cy="418" rx="2.4" ry="3.5"/><ellipse cx="79" cy="418" rx="2.4" ry="3.5"/><ellipse cx="23" cy="434" rx="2.4" ry="3.5"/><ellipse cx="31" cy="434" rx="2.4" ry="3.5"/><ellipse cx="63" cy="434" rx="2.4" ry="3.5"/><ellipse cx="79" cy="434" rx="2.4" ry="3.5"/><ellipse cx="23" cy="450" rx="2.4" ry="3.5"/><ellipse cx="31" cy="450" rx="2.4" ry="3.5"/><ellipse cx="63" cy="450" rx="2.4" ry="3.5"/><ellipse cx="79" cy="450" rx="2.4" ry="3.5"/><ellipse cx="23" cy="466" rx="2.4" ry="3.5"/><ellipse cx="31" cy="466" rx="2.4" ry="3.5"/><ellipse cx="63" cy="466" rx="2.4" ry="3.5"/><ellipse cx="79" cy="466" rx="2.4" ry="3.5"/><ellipse cx="23" cy="482" rx="2.4" ry="3.5"/><ellipse cx="31" cy="482" rx="2.4" ry="3.5"/><ellipse cx="63" cy="482" rx="2.4" ry="3.5"/><ellipse cx="79" cy="482" rx="2.4" ry="3.5"/><ellipse cx="23" cy="498" rx="2.4" ry="3.5"/><ellipse cx="31" cy="498" rx="2.4" ry="3.5"/><ellipse cx="63" cy="498" rx="2.4" ry="3.5"/><ellipse cx="79" cy="498" rx="2.4" ry="3.5"/><ellipse cx="23" cy="514" rx="2.4" ry="3.5"/><ellipse cx="31" cy="514" rx="2.4" ry="3.5"/><ellipse cx="63" cy="514" rx="2.4" ry="3.5"/><ellipse cx="79" cy="514" rx="2.4" ry="3.5"/><ellipse cx="23" cy="530" rx="2.4" ry="3.5"/><ellipse cx="31" cy="530" rx="2.4" ry="3.5"/><ellipse cx="63" cy="530" rx="2.4" ry="3.5"/><ellipse cx="79" cy="530" rx="2.4" ry="3.5"/><ellipse cx="23" cy="546" rx="2.4" ry="3.5"/><ellipse cx="31" cy="546" rx="2.4" ry="3.5"/><ellipse cx="63" cy="546" rx="2.4" ry="3.5"/><ellipse cx="79" cy="546" rx="2.4" ry="3.5"/></svg>
<div style="left:758px;top:83px;width:379px;height:474px;background:#fafafa"></div>
<div style="left:1133px;top:83px;width:4px;height:474px;background:#fff"></div>
<div style="left:758px;top:107px;width:2px;height:450px;background:#fff"></div>
<div style="left:759px;top:83px;width:377px;height:24px;background:linear-gradient(#f6f6f6,#ececec 60%,#e0e0e0);border:1px solid #d0d0d0;border-top-color:#f4f4f4;border-bottom:1px solid #8c8c8c;border-left-color:#e8e8e8"></div>
<svg style="left:1121px;top:92px" width="8" height="8" viewBox="0 0 8 8"><path d="M1 1.2L7 6.8M7 1.2L1 6.8" stroke="#000" stroke-width="1.7"/></svg>
<div style="left:759px;top:133px;width:372px;height:423px;background:#fafafa;border:1px solid #ebebeb;border-bottom:none;border-left-color:#f4f4f4"></div>
<div style="left:759px;top:111px;width:112px;height:23px;background:#fafafa;border:1px solid #e4e4e4;border-bottom:none;border-left-color:#f3f3f3"></div>
<svg style="left:769px;top:145px" width="84" height="13" viewBox="0 0 84 13" fill="#111"><rect x="0.7" y="0" width="2" height="13"/><path d="M14.1 0V13L6 6.5Z"/><path d="M12.4 3.2V9.8L8.4 6.5Z" fill="#4a4a4a"/><path d="M34.1 0V13L26 6.5Z"/><path d="M32.4 3.2V9.8L28.4 6.5Z" fill="#4a4a4a"/><path d="M49 0V13L57.1 6.5Z"/><path d="M50.6 3.2V9.8L54.6 6.5Z" fill="#4a4a4a"/><path d="M69 0V13L77.2 6.5Z"/><path d="M70.6 3.2V9.8L74.6 6.5Z" fill="#4a4a4a"/><rect x="80" y="0" width="2" height="13"/></svg>
<div style="left:765px;top:169px;width:361px;height:311px;background:#fff;border:1px solid #abadb3;border-top-color:#94969c"></div>
<div style="left:1108px;top:171px;width:16px;height:307px;background:#f0f0f0"></div>
<div style="left:1115px;top:188px;width:2px;height:150px;background:#868686"></div>
<div style="left:767px;top:171px;width:170px;height:18px;background:#0078d7"></div>
<div style="left:767px;top:189px;width:341px;height:1px;background:#e6e6e6"></div>
<div style="left:767px;top:208px;width:341px;height:1px;background:#e6e6e6"></div>
<div style="left:767px;top:227px;width:341px;height:1px;background:#e6e6e6"></div>
<div style="left:767px;top:246px;width:341px;height:1px;background:#e6e6e6"></div>
<div style="left:767px;top:265px;width:341px;height:1px;background:#e6e6e6"></div>
<div style="left:767px;top:284px;width:341px;height:1px;background:#e6e6e6"></div>
<div style="left:767px;top:303px;width:341px;height:1px;background:#e6e6e6"></div>
<div style="left:767px;top:322px;width:341px;height:1px;background:#e6e6e6"></div>
<div style="left:767px;top:341px;width:341px;height:1px;background:#e6e6e6"></div>
<div style="left:767px;top:360px;width:341px;height:1px;background:#e6e6e6"></div>
<div style="left:767px;top:379px;width:341px;height:1px;background:#e6e6e6"></div>
<div style="left:767px;top:398px;width:341px;height:1px;background:#e6e6e6"></div>
<div style="left:767px;top:417px;width:341px;height:1px;background:#e6e6e6"></div>
<div style="left:767px;top:436px;width:341px;height:1px;background:#e6e6e6"></div>
<div style="left:767px;top:455px;width:341px;height:1px;background:#e6e6e6"></div>
<div style="left:767px;top:474px;width:341px;height:1px;background:#e6e6e6"></div>
<div style="left:937px;top:171px;width:1px;height:307px;background:#e6e6e6"></div>
<svg style="left:942px;top:439px" width="13" height="12" viewBox="0 0 13 12" fill="none" stroke="#000" stroke-width="0.95"><path d="M0.3 1.6H12.6M4.3 0V2.8M8.5 0V2.8M1.6 4.2V11.8M4.9 4.2V11.8M1.6 4.5H4.9M1.6 6.9H4.9M1.6 9.4H4.9M6.5 3.6H12.6M6.8 5.4V11.8M11.7 5.4V11.8M6.8 5.5H11.7M6.8 7.6H11.7M6.8 9.8H11.7"/></svg>
<div style="left:765px;top:493px;width:361px;height:33px;border:1px solid #dcdcdc"></div>
<div style="left:772px;top:486px;width:84px;height:14px;background:#fafafa"></div>
<div style="left:773px;top:506px;width:13px;height:13px;border-radius:50%;background:#fff;border:3.6px solid #0067c0"></div>
<div style="left:948px;top:506px;width:13px;height:13px;border-radius:50%;background:#fff;border:1px solid #5e5e5e"></div>
<div style="left:765px;top:535px;width:13px;height:13px;border-radius:3px;background:#fff;border:1px solid #5e5e5e"></div>
<div style="left:758px;top:557px;width:379px;height:1px;background:#fff"></div>
<div style="left:1px;top:558px;width:1136px;height:21px;background:#f0f0f0;border-top:1px solid #d9d9d9"></div>
<div class="vs" style="left:160px;top:560px;height:17px"></div>
<div class="vs" style="left:430px;top:560px;height:17px"></div>
<div class="vs" style="left:590px;top:560px;height:17px"></div>
<div class="vs" style="left:690px;top:560px;height:17px"></div>
<div style="left:1133px;top:575px;width:2px;height:2px;background:#b8b8b8"></div>
<div style="left:1130px;top:575px;width:2px;height:2px;background:#b8b8b8"></div>
<div style="left:1133px;top:572px;width:2px;height:2px;background:#b8b8b8"></div>
<div style="left:1127px;top:575px;width:2px;height:2px;background:#b8b8b8"></div>
<div style="left:1130px;top:572px;width:2px;height:2px;background:#b8b8b8"></div>
<div style="left:1133px;top:569px;width:2px;height:2px;background:#b8b8b8"></div>
<div class="t" style="left:29.9px;top:9px;letter-spacing:0.034px;color:#1a1a1a;">HxD - [C:\Xgpro\UserData\testhp14dk]</div>
<div class="t" style="left:32.06px;top:37px;letter-spacing:0.155px;">Archivo</div>
<div class="t" style="left:82.3px;top:37px;letter-spacing:0.024px;">Edición</div>
<div class="t" style="left:131.7px;top:37px;letter-spacing:-0.46px;">Buscar</div>
<div class="t" style="left:177.36px;top:37px;letter-spacing:-1.3px;">Ver</div>
<div class="t" style="left:203.06px;top:37px;letter-spacing:-0.186px;">Análisis</div>
<div class="t" style="left:252.6px;top:37px;letter-spacing:-0.466px;">Extras</div>
<div class="t" style="left:293.86px;top:37px;letter-spacing:-0.399px;">Ventanas</div>
<div class="t" style="left:351.16px;top:37px;letter-spacing:-0.219px;">Ayuda</div>
<div class="t" style="left:211.7px;top:62px;letter-spacing:-0.67px;">16</div>
<div class="t" style="left:282.42px;top:62px;letter-spacing:-0.233px;">Windows (ANSI)</div>
<div class="t" style="left:431.6px;top:62px;letter-spacing:-0.278px;">hex</div>
<div class="t" style="left:31.06px;top:89px;letter-spacing:-0.11px;">testhp14dk</div>
<div class="t" style="left:2.6px;top:563px;letter-spacing:-0.233px;">Desplazamiento(h): 283000</div>
<div class="t" style="left:164.6px;top:563px;letter-spacing:-0.433px;">Bloque(h): 283000-283FFF</div>
<div class="t" style="left:436.16px;top:563px;letter-spacing:-0.295px;">Tamaño(h): 1000</div>
<div class="t" style="left:594.57px;top:563px;letter-spacing:0.303px;">* Modificado *</div>
<div class="t" style="left:694.1px;top:563px;letter-spacing:-0.173px;">Sobreescribir</div>
<div class="t" style="left:761.9px;top:89px;letter-spacing:-0.318px;">Editores especiales</div>
<div class="t" style="left:765.56px;top:115px;letter-spacing:-0.059px;">Inspector de datos</div>
<div class="t" style="left:770.6px;top:173px;letter-spacing:-0.001px;color:#fff;">Binary (8 bit)</div>
<div class="t" style="left:942.2px;top:173px;letter-spacing:-0.67px;">00100100</div>
<div class="t" style="left:770.56px;top:192px;letter-spacing:0.36px;">Int8</div>
<div class="t" style="left:913.9px;top:192px;letter-spacing:-0.3px;color:#0000e0;text-decoration:underline;">Ir a:</div>
<div class="t" style="left:942.0px;top:192px;letter-spacing:-0.67px;">36</div>
<div class="t" style="left:770.6px;top:211px;letter-spacing:-0.004px;">UInt8</div>
<div class="t" style="left:913.9px;top:211px;letter-spacing:-0.3px;color:#0000e0;text-decoration:underline;">Ir a:</div>
<div class="t" style="left:942.0px;top:211px;letter-spacing:-0.67px;">36</div>
<div class="t" style="left:770.56px;top:230px;letter-spacing:-0.039px;">Int16</div>
<div class="t" style="left:913.9px;top:230px;letter-spacing:-0.3px;color:#0000e0;text-decoration:underline;">Ir a:</div>
<div class="t" style="left:941.6px;top:230px;letter-spacing:-0.67px;">17700</div>
<div class="t" style="left:770.6px;top:249px;letter-spacing:-0.17px;">UInt16</div>
<div class="t" style="left:913.9px;top:249px;letter-spacing:-0.3px;color:#0000e0;text-decoration:underline;">Ir a:</div>
<div class="t" style="left:941.6px;top:249px;letter-spacing:-0.67px;">17700</div>
<div class="t" style="left:770.56px;top:268px;letter-spacing:-0.099px;">Int24</div>
<div class="t" style="left:913.9px;top:268px;letter-spacing:-0.3px;color:#0000e0;text-decoration:underline;">Ir a:</div>
<div class="t" style="left:941.94px;top:268px;letter-spacing:-0.67px;">5260580</div>
<div class="t" style="left:770.6px;top:287px;letter-spacing:-0.12px;">UInt24</div>
<div class="t" style="left:913.9px;top:287px;letter-spacing:-0.3px;color:#0000e0;text-decoration:underline;">Ir a:</div>
<div class="t" style="left:941.94px;top:287px;letter-spacing:-0.67px;">5260580</div>
<div class="t" style="left:770.56px;top:306px;letter-spacing:0.036px;">Int32</div>
<div class="t" style="left:913.9px;top:306px;letter-spacing:-0.3px;color:#0000e0;text-decoration:underline;">Ir a:</div>
<div class="t" style="left:941.6px;top:306px;letter-spacing:-0.67px;">1380992292</div>
<div class="t" style="left:770.6px;top:325px;letter-spacing:-0.12px;">UInt32</div>
<div class="t" style="left:913.9px;top:325px;letter-spacing:-0.3px;color:#0000e0;text-decoration:underline;">Ir a:</div>
<div class="t" style="left:941.6px;top:325px;letter-spacing:-0.67px;">1380992292</div>
<div class="t" style="left:770.56px;top:344px;letter-spacing:-0.099px;">Int64</div>
<div class="t" style="left:913.9px;top:344px;letter-spacing:-0.3px;color:#0000e0;text-decoration:underline;">Ir a:</div>
<div class="t" style="left:942.0px;top:344px;letter-spacing:-0.67px;">302028703012</div>
<div class="t" style="left:770.6px;top:363px;letter-spacing:-0.12px;">UInt64</div>
<div class="t" style="left:913.9px;top:363px;letter-spacing:-0.3px;color:#0000e0;text-decoration:underline;">Ir a:</div>
<div class="t" style="left:942.0px;top:363px;letter-spacing:-0.67px;">302028703012</div>
<div class="t" style="left:770.6px;top:382px;letter-spacing:-1.043px;">LEB128</div>
<div class="t" style="left:913.9px;top:382px;letter-spacing:-0.3px;color:#0000e0;text-decoration:underline;">Ir a:</div>
<div class="t" style="left:942.0px;top:382px;letter-spacing:-0.67px;">36</div>
<div class="t" style="left:770.6px;top:401px;letter-spacing:-0.98px;">ULEB128</div>
<div class="t" style="left:913.9px;top:401px;letter-spacing:-0.3px;color:#0000e0;text-decoration:underline;">Ir a:</div>
<div class="t" style="left:942.0px;top:401px;letter-spacing:-0.67px;">36</div>
<div class="t" style="left:771.46px;top:420px;letter-spacing:-0.189px;">AnsiChar / char8_t</div>
<div class="t" style="left:942.31px;top:420px;">$</div>
<div class="t" style="left:771.52px;top:439px;letter-spacing:-0.206px;">WideChar / char16_t</div>
<div class="t" style="left:770.6px;top:458px;letter-spacing:-0.071px;">Punto de código UTF-8</div>
<div class="t" style="left:942.31px;top:458px;letter-spacing:-0.464px;">$ (U+0024)</div>
<div class="t" style="left:774.3px;top:486px;letter-spacing:-0.202px;">Orden de bytes</div>
<div class="t" style="left:788.7px;top:506px;letter-spacing:0.027px;">Little endian</div>
<div class="t" style="left:963.5px;top:506px;letter-spacing:0.036px;">Big endian</div>
<div class="t" style="left:780.4px;top:535px;letter-spacing:-0.16px;">Base hexadecimal (para números enteros)</div>
</div>
<div style="left:0;top:0;width:1138px;height:580px;border:1px solid #9c9c9c;border-radius:8px;border-top-color:#b0b0b0;border-left-color:#adadad"></div>
</body></html>
